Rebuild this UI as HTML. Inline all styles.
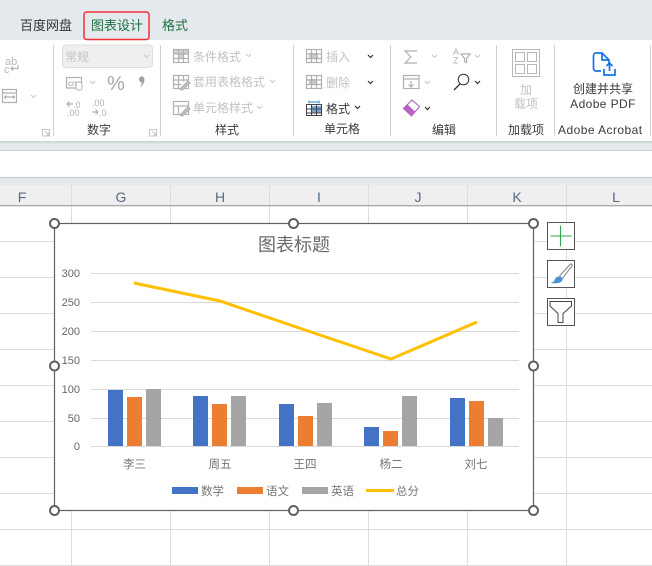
<!DOCTYPE html>
<html><head><meta charset="utf-8">
<style>
html,body{margin:0;padding:0;background:#fff;width:652px;height:566px;overflow:hidden}
svg{display:block}
text{font-family:"Liberation Sans","Noto Sans CJK SC",sans-serif}
.d{fill:#c2c2c2;font-size:12px}
.k{fill:#3a3a3a;font-size:12px}
.ax{fill:#666;font-size:11px}
.cat{fill:#757575;font-size:11.5px}
.col{fill:#566a84;font-size:14px}
.ic{fill:none;stroke:#b0b0b0;stroke-width:1.2}
.ch{fill:none;stroke:#c8c8c8;stroke-width:1.1}
.chd{fill:none;stroke:#333;stroke-width:1.2}
.sep{stroke:#d0d0d0;stroke-width:1}
.g{stroke:#dcdcdc;stroke-width:1}
.h{fill:#fff;stroke:#606060;stroke-width:2}
</style></head>
<body>
<svg width="652" height="566" viewBox="0 0 652 566" xmlns="http://www.w3.org/2000/svg">
<defs><linearGradient id="sh" x1="0" y1="0" x2="0" y2="1"><stop offset="0" stop-color="#c9cdd0"/><stop offset="1" stop-color="#e3e9ec"/></linearGradient></defs>
<rect width="652" height="566" fill="#fff"/>
<rect width="652" height="40" fill="#e3e9ec"/>
<rect y="141" width="652" height="9" fill="#e3e9ec"/>
<rect y="141" width="652" height="3" fill="url(#sh)"/>
<rect y="150" width="652" height="1" fill="#cfcfcf"/>
<rect y="177" width="652" height="1" fill="#c8c8c8"/>
<rect y="178" width="652" height="7" fill="#e3e9ec"/>
<rect y="185" width="652" height="20" fill="#efefef"/>
<rect y="205" width="652" height="1.2" fill="#a8a8a8"/>

<!-- tabs -->
<text x="20" y="30" font-size="13" fill="#333">百度网盘</text>
<rect x="84" y="12" width="65" height="27.500" rx="2.500" fill="#e3e9ec" stroke="#f0303c" stroke-width="1.500"/>
<text x="91" y="30" font-size="13" fill="#1f6f43">图表设计</text>
<text x="162" y="30" font-size="13" fill="#1f6f43">格式</text>

<!-- separators -->
<g class="sep">
<line x1="53.500" y1="45" x2="53.500" y2="136"/><line x1="160.500" y1="45" x2="160.500" y2="136"/>
<line x1="293.500" y1="45" x2="293.500" y2="136"/><line x1="390.500" y1="45" x2="390.500" y2="136"/>
<line x1="496.500" y1="45" x2="496.500" y2="136"/><line x1="554.500" y1="45" x2="554.500" y2="136"/>
<line x1="650.500" y1="45" x2="650.500" y2="136"/>
</g>

<!-- left fragment -->
<text x="5" y="65" font-size="11" fill="#b8b8b8">ab</text>
<text x="4" y="73" font-size="11" fill="#b8b8b8">c</text>
<path d="M18 65v3.500h-7m2-2l-2 2 2 2" class="ic" stroke-width="1"/>
<rect x="2.500" y="89.500" width="14" height="13" class="ic"/>
<path d="M3 93h13M5 97h9m-8-1.500l-1.500 1.500 1.500 1.500m7-3l1.500 1.500-1.500 1.500" class="ic" stroke-width="1"/>
<path d="M31 95l2.500 2.500 2.500-2.500" class="ch"/>
<path d="M42.500 129.500h7v6.500h-7zM45 131l4 4m-2.500 0h2.500v-2.500" class="ch" stroke-width="0.9"/>

<!-- number group -->
<rect x="62.500" y="45" width="90" height="22.500" rx="3.500" fill="#efefef" stroke="#dcdcdc"/>
<text x="65" y="61" font-size="12" fill="#c2c2c2">常规</text>
<path d="M144 55l2.500 2.500 2.500-2.500" class="ch"/>
<rect x="66.500" y="77.500" width="15" height="10.500" class="ic"/>
<text x="68" y="86" font-size="8" fill="#a0a0a0">cn</text>
<rect x="76" y="82" width="6" height="8" rx="2" fill="#fff" stroke="#b0b0b0"/>
<path d="M90 81l2.500 2.500 2.500-2.500" class="ch"/>
<text x="107" y="90" font-size="20" fill="#a8a8a8">%</text>
<path d="M141 76.500a2.800 2.800 0 0 1 3.500 2.800c0 3.500-1.800 6-4.200 8 1-2.200 1.400-3.500 1.300-5a3 3 0 0 1-.6-5.800z" fill="#a0a0a0"/>
<text x="73" y="108" font-size="9" fill="#b0b0b0">.0</text>
<text x="67" y="116" font-size="9" fill="#b0b0b0">.00</text>
<path d="M73 104h-6m2.500-2.500l-2.500 2.500 2.500 2.500" class="ic" stroke-width="0.8"/>
<text x="92" y="106" font-size="9" fill="#b0b0b0">.00</text>
<text x="99" y="116" font-size="9" fill="#b0b0b0">.0</text>
<path d="M92 112h6m-2.500-2.500l2.500 2.500-2.500 2.500" class="ic" stroke-width="0.8"/>
<text x="87" y="134" class="k">数字</text>
<path d="M149.500 129.500h7v6.500h-7zM152 131l4 4m-2.500 0h2.500v-2.500" class="ch" stroke-width="0.9"/>

<!-- styles group -->
<rect x="178" y="54" width="5" height="4.500" fill="#cfcfcf"/>
<rect x="174" y="50" width="14" height="4" fill="#cfcfcf"/>
<g class="ic">
<rect x="173.500" y="49.500" width="15" height="13"/><path d="M173.500 54h15M173.500 58.500h15M178.500 49.500v13M183.500 49.500v13"/>
<rect x="173.500" y="75.500" width="15" height="13"/><path d="M173.500 80h15M173.500 84.500h8M178.500 75.500v13M183.500 75.500v6"/><path d="M180 89l8-8 2 2-8 7z" fill="#c4c4c4"/>
<rect x="173.500" y="101.500" width="15" height="13"/><path d="M173.500 106h15M178.500 106v8"/><path d="M180 115l8-8 2 2-8 7z" fill="#c4c4c4"/>
</g>
<text x="193" y="61" class="d">条件格式</text><path d="M246 54l2.500 2.500 2.500-2.500" class="ch"/>
<text x="193" y="86" class="d">套用表格格式</text><path d="M270 80l2.500 2.500 2.500-2.500" class="ch"/>
<text x="193" y="112" class="d">单元格样式</text><path d="M257 106l2.500 2.500 2.500-2.500" class="ch"/>
<text x="215" y="134" class="k">样式</text>

<!-- cells group -->
<rect x="309" y="53" width="9" height="5" fill="#cccccc"/>
<rect x="309" y="79" width="7" height="6" fill="#c8c8c8"/>
<g class="ic">
<rect x="306.500" y="49.500" width="15" height="13"/><path d="M306.500 54h15M306.500 58.500h15M311.500 49.500v13M316.500 49.500v13"/>
<rect x="306.500" y="75.500" width="15" height="13"/><path d="M306.500 80h15M306.500 84.500h15M311.500 75.500v13M316.500 75.500v13"/>
</g>
<text x="326" y="61" class="d">插入</text><path d="M368 55l2.500 2.500 2.500-2.500" class="chd"/>
<text x="326" y="87" class="d">删除</text><path d="M368 81l2.500 2.500 2.500-2.500" class="chd"/>
<rect x="311" y="106" width="10" height="7" fill="#6fa8d8"/>
<path d="M306.500 104.500h15v11h-15zM306.500 109h15M306.500 113h15M311.500 104.500v11M316.500 104.500v11" fill="none" stroke="#444" stroke-width="1"/>
<path d="M309 100.500v3M319 100.500v3M309 102h10" fill="none" stroke="#2b8ad0" stroke-width="1"/>
<text x="326" y="113" class="k">格式</text><path d="M355 106l2.500 2.500 2.500-2.500" class="chd"/>
<text x="324" y="133" class="k">单元格</text>

<!-- editing -->
<path d="M417 51h-12l6 6-6 6h12" class="ic" stroke-width="1"/>
<path d="M432 55l2.500 2.500 2.500-2.500" class="ch"/>
<text x="453" y="55" font-size="9" fill="#b0b0b0">A</text><text x="453" y="63.500" font-size="9" fill="#b0b0b0">Z</text>
<path d="M461 54h9l-3.500 4.500v4l-2-1v-3z" class="ic"/>
<path d="M475 55l2.500 2.500 2.500-2.500" class="ch"/>
<rect x="403.500" y="75.500" width="15.500" height="13" class="ic"/>
<path d="M404 79h15M411 81v6m-2.500-2.500l2.500 2.500 2.500-2.500" class="ic" stroke-width="1"/>
<path d="M425 81l2.500 2.500 2.500-2.500" class="ch"/>
<circle cx="463.500" cy="79.500" r="5.300" fill="none" stroke="#333" stroke-width="1"/>
<path d="M460 84l-6 6" fill="none" stroke="#333" stroke-width="1.300"/>
<path d="M475 81l2.500 2.500 2.500-2.500" class="chd"/>
<path d="M403.500 108.500l8.500-8.500 7.500 6.500-8 9.500z" fill="#fff" stroke="#b05fbe" stroke-width="1.100"/>
<path d="M403.500 108.500l4-4 7.500 7-3.500 4z" fill="#b862c6"/>
<path d="M425 107l2.500 2.500 2.500-2.500" class="chd"/>
<text x="432" y="134" class="k">编辑</text>

<!-- add-ins -->
<rect x="512.500" y="49.500" width="27" height="27" fill="none" stroke="#b8b8b8"/>
<g fill="none" stroke="#b8b8b8"><rect x="515.500" y="52.500" width="9" height="9"/><rect x="527.500" y="52.500" width="9" height="9"/><rect x="515.500" y="64.500" width="9" height="9"/><rect x="527.500" y="64.500" width="9" height="9"/></g>
<text x="526" y="94" class="d" text-anchor="middle">加</text>
<text x="526" y="108" class="d" text-anchor="middle">载项</text>
<text x="508" y="134" class="k">加载项</text>

<!-- adobe -->
<path d="M601 71h-5a2.500 2.500 0 0 1-2.500-2.500v-13a2.500 2.500 0 0 1 2.500-2.500h6l7 7v3M602 53v7h7" fill="none" stroke="#1473e6" stroke-width="1.700"/>
<path d="M604 69v6h11v-6M609.500 71v-8m-3 3l3-3 3 3" fill="none" stroke="#1473e6" stroke-width="1.700"/>
<text x="573" y="93" class="k">创建并共享</text>
<text x="603" y="108" class="k" text-anchor="middle" letter-spacing="0.400">Adobe PDF</text>
<text x="558" y="134" class="k" letter-spacing="0.450">Adobe Acrobat</text>

<!-- column headers and grid -->
<g class="g">
<line x1="71.500" y1="185" x2="71.500" y2="566"/><line x1="170.500" y1="185" x2="170.500" y2="566"/>
<line x1="269.500" y1="185" x2="269.500" y2="566"/><line x1="368.500" y1="185" x2="368.500" y2="566"/>
<line x1="467.500" y1="185" x2="467.500" y2="566"/><line x1="566.500" y1="185" x2="566.500" y2="566"/>
</g>
<g class="col" text-anchor="middle">
<text x="22" y="202">F</text><text x="121" y="202">G</text><text x="220" y="202">H</text>
<text x="319" y="202">I</text><text x="418" y="202">J</text><text x="517" y="202">K</text><text x="616" y="202">L</text>
</g>
<rect y="205" width="652" height="1.200" fill="#a8a8a8"/>
<g class="g">
<line x1="0" y1="241.500" x2="652" y2="241.500"/><line x1="0" y1="277.500" x2="652" y2="277.500"/>
<line x1="0" y1="313.500" x2="652" y2="313.500"/><line x1="0" y1="349.500" x2="652" y2="349.500"/>
<line x1="0" y1="385.500" x2="652" y2="385.500"/><line x1="0" y1="421.500" x2="652" y2="421.500"/>
<line x1="0" y1="457.500" x2="652" y2="457.500"/><line x1="0" y1="493.500" x2="652" y2="493.500"/>
<line x1="0" y1="529.500" x2="652" y2="529.500"/><line x1="0" y1="565.500" x2="652" y2="565.500"/>
</g>

<!-- chart -->
<rect x="54.500" y="223.500" width="479" height="287" fill="#fff" stroke="#606060" stroke-width="1.200"/>
<text x="294" y="251" font-size="18" fill="#6a6a6a" text-anchor="middle">图表标题</text>
<g stroke="#d9d9d9" stroke-width="1">
<line x1="91" y1="273.500" x2="519" y2="273.500"/><line x1="91" y1="302.500" x2="519" y2="302.500"/>
<line x1="91" y1="331.500" x2="519" y2="331.500"/><line x1="91" y1="360.500" x2="519" y2="360.500"/>
<line x1="91" y1="389.500" x2="519" y2="389.500"/><line x1="91" y1="418.500" x2="519" y2="418.500"/>
<line x1="91" y1="446.500" x2="519" y2="446.500"/>
</g>
<g class="ax" text-anchor="end">
<text x="80" y="277">300</text><text x="80" y="306">250</text><text x="80" y="335">200</text>
<text x="80" y="364">150</text><text x="80" y="393">100</text><text x="80" y="422">50</text><text x="80" y="450">0</text>
</g>
<g fill="#4472c4">
<rect x="108" y="390" width="15" height="56"/><rect x="193" y="396" width="15" height="50"/>
<rect x="279" y="404" width="15" height="42"/><rect x="364" y="427" width="15" height="19"/><rect x="450" y="398" width="15" height="48"/>
</g>
<g fill="#ed7d31">
<rect x="127" y="397" width="15" height="49"/><rect x="212" y="404" width="15" height="42"/>
<rect x="298" y="416" width="15" height="30"/><rect x="383" y="431" width="15" height="15"/><rect x="469" y="401" width="15" height="45"/>
</g>
<g fill="#a5a5a5">
<rect x="146" y="389" width="15" height="57"/><rect x="231" y="396" width="15" height="50"/>
<rect x="317" y="403" width="15" height="43"/><rect x="402" y="396" width="15" height="50"/><rect x="488" y="418" width="15" height="28"/>
</g>
<polyline points="134,283 220,301 305,330 391,359 477,322" fill="none" stroke="#ffc000" stroke-width="3"/>
<g class="cat" text-anchor="middle">
<text x="134.500" y="468">李三</text><text x="220" y="468">周五</text><text x="305" y="468">王四</text>
<text x="391" y="468">杨二</text><text x="476" y="468">刘七</text>
</g>
<rect x="172" y="487" width="26" height="7" fill="#4472c4"/><text x="201" y="495" class="cat">数学</text>
<rect x="237" y="487" width="26" height="7" fill="#ed7d31"/><text x="266" y="495" class="cat">语文</text>
<rect x="302" y="487" width="26" height="7" fill="#a5a5a5"/><text x="331" y="495" class="cat">英语</text>
<rect x="366" y="489" width="28" height="3" fill="#ffc000"/><text x="396" y="495" class="cat">总分</text>

<!-- handles -->
<circle class="h" cx="54.500" cy="223.500" r="4.500"/><circle class="h" cx="293.500" cy="223.500" r="4.500"/><circle class="h" cx="533.500" cy="223.500" r="4.500"/>
<circle class="h" cx="54.500" cy="366" r="4.500"/><circle class="h" cx="533.500" cy="366" r="4.500"/>
<circle class="h" cx="54.500" cy="510.500" r="4.500"/><circle class="h" cx="293.500" cy="510.500" r="4.500"/><circle class="h" cx="533.500" cy="510.500" r="4.500"/>

<!-- side buttons -->
<rect x="547.500" y="222.500" width="27" height="27" fill="#fff" stroke="#555"/>
<path d="M550.500 236h21M560.500 225.500v21" stroke="#33a150" stroke-width="1.100" fill="none"/>
<rect x="547.500" y="260.500" width="27" height="27" fill="#fff" stroke="#555"/>
<path d="M559.500 276l10.500-11.500c1.200-1.200 2.800-.2 2 1.300L562 279" fill="#fff" stroke="#808080" stroke-width="1"/>
<path d="M559 276.500c2-.5 3.500 1 3.500 3 0 3-5 4.500-12 3.500 3-1 4-2 4.500-4 .5-1.500 2.500-2.500 4-2.500z" fill="#4a90d6"/>
<rect x="547.500" y="298.500" width="27" height="27" fill="#fff" stroke="#555"/>
<path d="M550 301.500h21.500v4.500l-8.500 7.500v9h-5v-9l-8-7.500z" fill="#fff" stroke="#444" stroke-width="1"/>
</svg>
</body></html>
